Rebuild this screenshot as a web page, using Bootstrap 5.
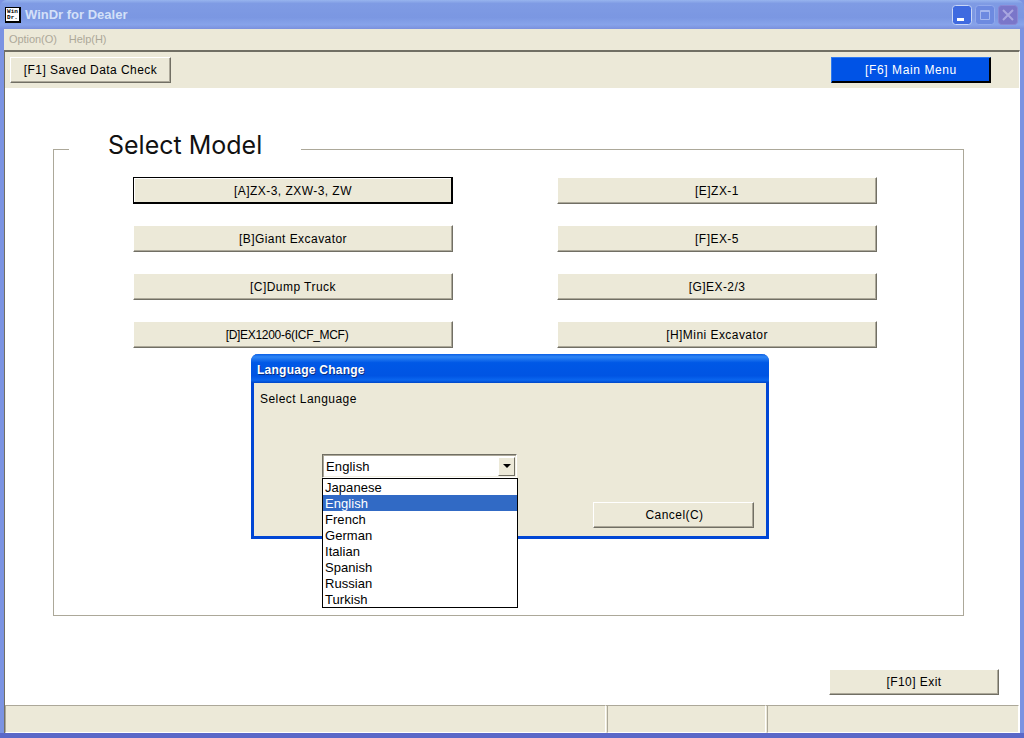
<!DOCTYPE html>
<html lang="en"><head><meta charset="utf-8"><title>WinDr for Dealer</title>
<link href="https://cdn.jsdelivr.net/npm/bootstrap@5.3.0/dist/css/bootstrap.min.css" rel="stylesheet">
<style>
html,body{margin:0;height:738px;overflow:hidden;background:#fff}
body{font-family:"Liberation Sans",Arial,sans-serif;font-size:12px;letter-spacing:.45px;color:#000;line-height:1}
.xp-win{width:1024px;height:738px;background:#7b93e2;border-bottom:5px solid #5a68c8;position:relative;box-sizing:border-box}
.xp-title{height:29px;background:linear-gradient(180deg,#97b4ee 0,#7f9be4 12%,#7b97e2 60%,#87a3ea 85%,#7b90dd 100%);padding:0 6px 0 5px;border-radius:7px 7px 0 0}
.xp-title-text{font-family:"Liberation Sans",sans-serif;font-weight:700;font-size:13px;letter-spacing:0;color:#d3e0f8;margin-left:4px}
.xp-app{width:16px;height:16px;background:#fff;border:1px solid #000;border-right-width:2px;border-bottom-width:2px;font:700 6px/6px "Liberation Mono",monospace;letter-spacing:0;text-align:center;padding-top:1px;color:#000;box-sizing:border-box}
.xp-caps{gap:3px}
.xp-cap{width:20px;height:20px;border-radius:3px;display:block}
.xp-menu{height:21px;margin:0 4px;padding:0 5px;background:#ece9d8;color:#aca899;font-size:11px;letter-spacing:-.05px;gap:12px}
.xp-client{height:683px;margin:0 4px;background:#fff;border-top:2px solid #716f64;border-left:1px solid #716f64;border-right:1px solid #fff;box-sizing:border-box;box-shadow:inset 0 1px 0 #aca899}
.xp-tool{height:36px;background:#ece9d8;padding:5px 28px 5px 5px;flex:none}
.xp-main{height:616px;flex:none;padding:46px 0 0 48px}
.btn.xp-btn{--bs-btn-padding-x:0;--bs-btn-padding-y:0;--bs-btn-border-radius:0;display:flex;align-items:center;justify-content:center;font-size:12px;letter-spacing:.45px;height:27px;background:#ece9d8;color:#000;border:1px solid;border-color:#fff #716f64 #716f64 #fff;box-shadow:inset -1px -1px 0 #aca899;line-height:1}
.xp-f1{width:161px;height:26px!important}
.btn.xp-f6{width:160px;height:26px;background:#0053e6;color:#fff;border-color:#2f7af0 #000 #000 #2f7af0;box-shadow:inset -1px -1px 0 #000;letter-spacing:.6px}
.btn.xp-default{border:1px solid #000;box-shadow:inset -1px -1px 0 #000,inset 1px 1px 0 #fff}
.btn.xp-tight{letter-spacing:-.3px;padding-right:12px}
.xp-group{width:911px;height:482px;border:1px solid #aca899;margin:0;padding:0 0 0 79px;min-width:0;box-sizing:border-box}
.xp-group legend{float:none;width:232px;margin:0 0 0 -64px;padding:0 0 8px 39px;font-family:"Inter","Liberation Sans",sans-serif;font-size:25px;line-height:22px;letter-spacing:0;color:#111}
.xp-grid{display:grid;grid-template-columns:320px 320px;column-gap:104px;row-gap:21px;margin-top:13px}
.btn.xp-exit{width:170px;height:26px;margin:53px 0 0 776px}
.xp-status{height:29px;background:#ece9d8;flex:none;gap:1px;border-top:1px solid #fff;box-shadow:inset 0 1px 0 #aca899}
.xp-pane{border-top:1px solid #aca899;border-left:1px solid #aca899;border-bottom:1px solid #fff;border-right:1px solid #fff;height:28px;box-sizing:border-box}
.xp-pane-a{width:601px}
.xp-pane-b{width:159px}
.xp-dlg{position:absolute;left:251px;top:354px;width:518px;height:185px;background:#ece9d8;border:3px solid #0046d5;border-top:0;border-radius:7px 7px 0 0;box-sizing:border-box}
.xp-dlg-title{height:29px;margin:0 -3px;padding:2px 0 0 6px;background:linear-gradient(180deg,#0a5fe6 0,#2f86f5 10%,#0058e6 30%,#0054e3 75%,#0a66ef 90%,#0046c8 100%);color:#fff;font-weight:700;font-size:12px;letter-spacing:.25px;border-radius:7px 7px 0 0;text-shadow:1px 1px 0 #0a2f80}
.xp-label{position:absolute;left:6px;top:39px}
.xp-combo{position:absolute;left:68px;top:100px;width:195px;height:24px;background:#fff;border:1px solid;border-color:#716f64 #fff #fff #716f64;box-shadow:inset 1px 1px 0 #aca899,inset -1px -1px 0 #f1efe2;padding-left:3px;font-size:13px;letter-spacing:.15px;box-sizing:border-box}
.xp-arrow{width:17px;height:19px;margin-right:1px;background:#ece9d8;border:1px solid;border-color:#fff #716f64 #716f64 #fff}
.btn.xp-cancel{position:absolute;left:339px;top:148px;width:161px;height:26px;padding-left:2px}
.xp-list{position:absolute;left:68px;top:124px;width:196px;height:130px;background:#fff;border:1px solid #000;padding:0;margin:0;box-sizing:border-box;--bs-list-group-border-radius:0;border-radius:0}
.xp-list .list-group-item{border:0;margin:0!important;padding:2px 0 0 2px;height:16px;display:flex;align-items:center;font-size:13px;letter-spacing:.05px;background:transparent;color:#000;line-height:14px}
.xp-list .list-group-item.active{background:#316ac5;color:#fff}
</style></head><body>
<div class="xp-win">
 <div class="xp-title d-flex align-items-center">
  <div class="xp-app">Win<br>Dr.</div>
  <span class="xp-title-text flex-grow-1">WinDr for Dealer</span>
  <div class="xp-caps d-flex">
   <svg class="xp-cap" viewBox="0 0 20 20"><rect x=".5" y=".5" width="19" height="19" rx="3" fill="#3f6ae0" stroke="#c9d6f6"/><rect x="5" y="13" width="7" height="3" fill="#fff"/></svg>
   <svg class="xp-cap" viewBox="0 0 20 20"><rect x=".5" y=".5" width="19" height="19" rx="3" fill="#6d8ae0" stroke="#93aaec"/><path d="M5.5 5.5h9v9h-9zM5.5 6.5h9" fill="none" stroke="#a5b8ef"/></svg>
   <svg class="xp-cap" viewBox="0 0 20 20"><rect x=".5" y=".5" width="19" height="19" rx="3" fill="#7a76c9" stroke="#8b88d4"/><path d="M5 5l10 10M15 5L5 15" stroke="#a9a7e0" stroke-width="2"/></svg>
  </div>
 </div>
 <nav class="xp-menu d-flex align-items-center"><span>Option(O)</span><span>Help(H)</span></nav>
 <div class="xp-client d-flex flex-column">
  <div class="xp-tool d-flex justify-content-between">
   <button class="btn xp-btn xp-f1">[F1] Saved Data Check</button>
   <button class="btn xp-btn xp-f6">[F6] Main Menu</button>
  </div>
  <div class="xp-main">
   <fieldset class="xp-group">
    <legend>Select Model</legend>
    <div class="xp-grid">
     <button class="btn xp-btn xp-default">[A]ZX-3, ZXW-3, ZW</button>
     <button class="btn xp-btn">[E]ZX-1</button>
     <button class="btn xp-btn">[B]Giant Excavator</button>
     <button class="btn xp-btn">[F]EX-5</button>
     <button class="btn xp-btn">[C]Dump Truck</button>
     <button class="btn xp-btn">[G]EX-2/3</button>
     <button class="btn xp-btn xp-tight">[D]EX1200-6(ICF_MCF)</button>
     <button class="btn xp-btn">[H]Mini Excavator</button>
    </div>
   </fieldset>
   <button class="btn xp-btn xp-exit">[F10] Exit</button>
  </div>
  <div class="xp-status d-flex">
   <div class="xp-pane xp-pane-a"></div>
   <div class="xp-pane xp-pane-b"></div>
   <div class="xp-pane flex-grow-1"></div>
  </div>
 </div>
 <div class="xp-dlg">
  <div class="xp-dlg-title d-flex align-items-center">Language Change</div>
  <div class="xp-label">Select Language</div>
  <div class="xp-combo d-flex align-items-center justify-content-between">English
   <span class="xp-arrow d-flex align-items-center justify-content-center"><svg width="8" height="4" viewBox="0 0 8 4"><path d="M0 0h8L4 4z" fill="#000"/></svg></span>
  </div>
  <ul class="list-group xp-list">
   <li class="list-group-item">Japanese</li>
   <li class="list-group-item active">English</li>
   <li class="list-group-item">French</li>
   <li class="list-group-item">German</li>
   <li class="list-group-item">Italian</li>
   <li class="list-group-item">Spanish</li>
   <li class="list-group-item">Russian</li>
   <li class="list-group-item">Turkish</li>
  </ul>
  <button class="btn xp-btn xp-cancel">Cancel(C)</button>
 </div>
</div>
<script src="https://cdn.jsdelivr.net/npm/bootstrap@5.3.0/dist/js/bootstrap.bundle.min.js"></script>
</body></html>
